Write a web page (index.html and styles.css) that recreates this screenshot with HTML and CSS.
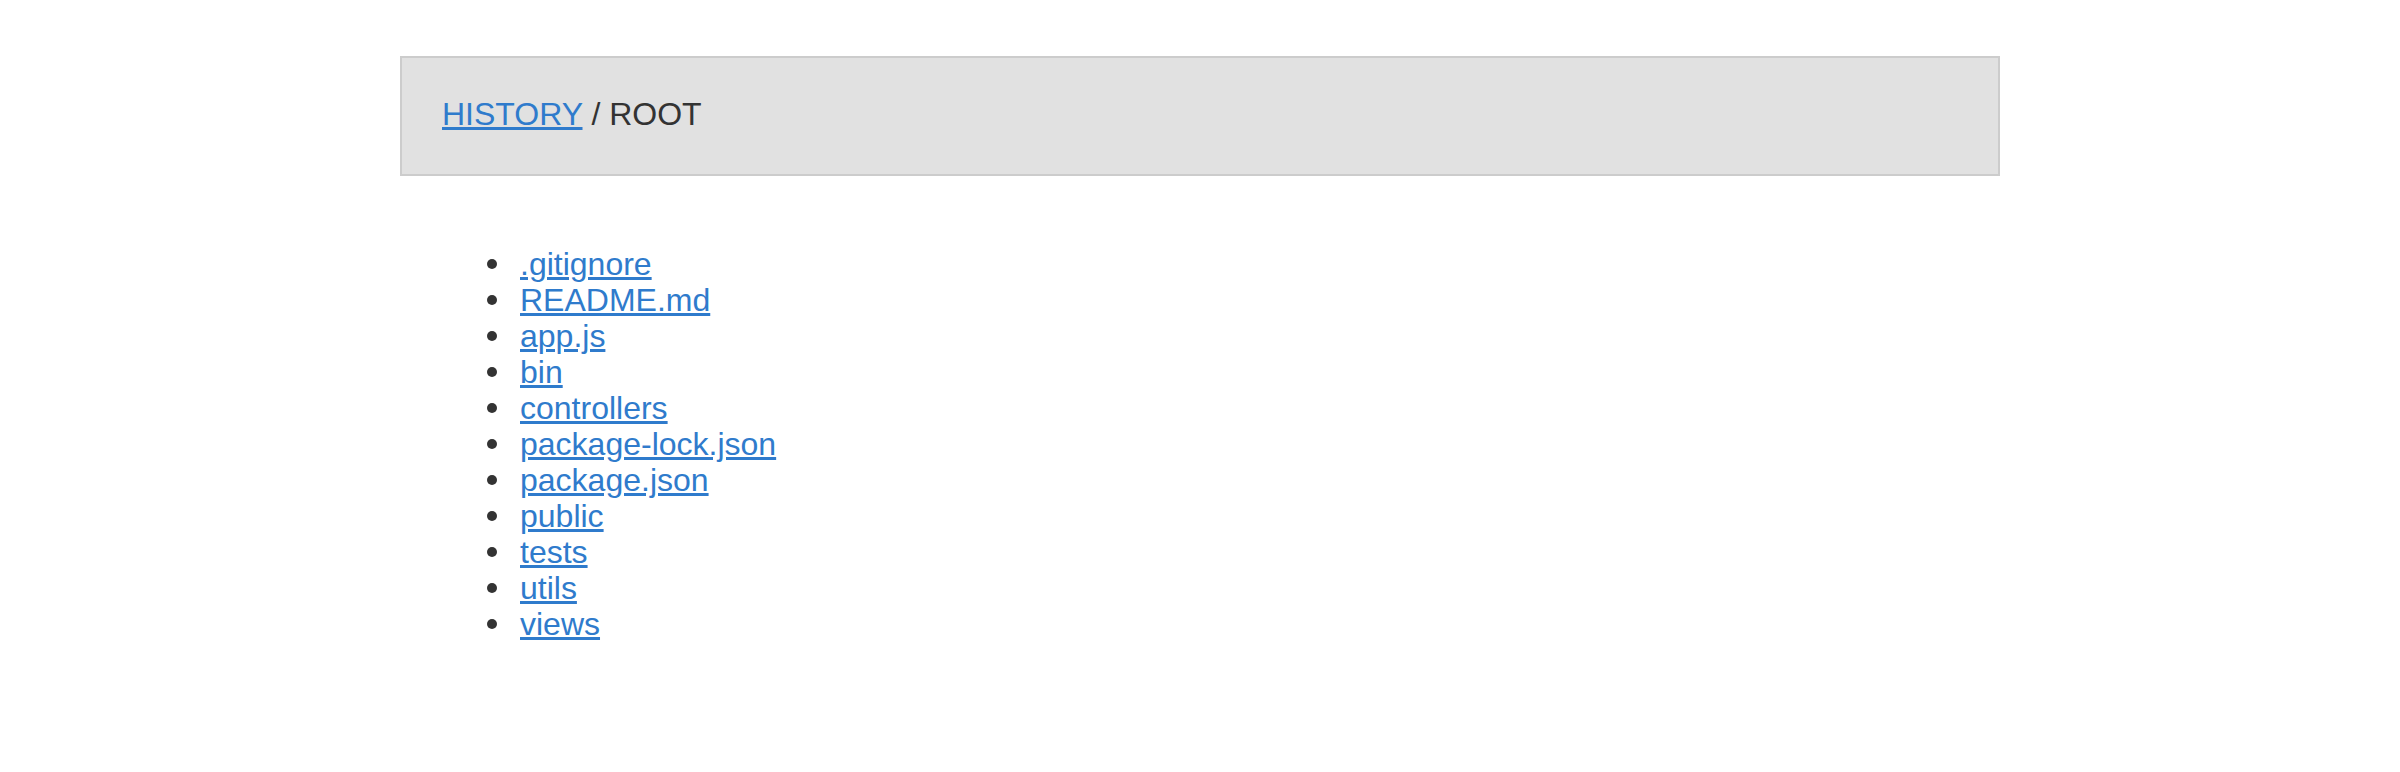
FILE: index.html
```html
<!DOCTYPE html>
<html>
<head>
<meta charset="utf-8">
<title>History</title>
<link rel="stylesheet" href="styles.css">
</head>
<body>
<main class="page">
  <header class="crumbs">
    <a class="link" href="#">HISTORY</a> / ROOT
  </header>
  <ul class="files">
    <li class="file"><a class="link" href="#">.gitignore</a></li>
    <li class="file"><a class="link" href="#">README.md</a></li>
    <li class="file"><a class="link" href="#">app.js</a></li>
    <li class="file"><a class="link" href="#">bin</a></li>
    <li class="file"><a class="link" href="#">controllers</a></li>
    <li class="file"><a class="link" href="#">package-lock.json</a></li>
    <li class="file"><a class="link" href="#">package.json</a></li>
    <li class="file"><a class="link" href="#">public</a></li>
    <li class="file"><a class="link" href="#">tests</a></li>
    <li class="file"><a class="link" href="#">utils</a></li>
    <li class="file"><a class="link" href="#">views</a></li>
  </ul>
</main>
</body>
</html>
```
FILE: styles.css
```css
html, body {
  margin: 0;
  padding: 0;
  background: #ffffff;
}
body {
  font-family: "Liberation Sans", Arial, Helvetica, sans-serif;
  font-size: 32px;
  line-height: 36px;
  color: #333333;
}
.page {
  width: 1600px;
  margin: 56px auto 0;
}
.crumbs {
  background: #e1e1e1;
  border: 2px solid #cccccc;
  padding: 38px 40px 42px;
}
.link {
  color: #2f7bcc;
  text-decoration: underline;
}
.files {
  margin: 70px 0 0;
  padding: 0 0 0 120px;
  list-style: none;
}
.file::before {
  content: "";
  display: inline-block;
  width: 10px;
  height: 10px;
  border-radius: 50%;
  background: #333333;
  margin-left: -33px;
  margin-right: 23px;
  vertical-align: 6px;
}
```
